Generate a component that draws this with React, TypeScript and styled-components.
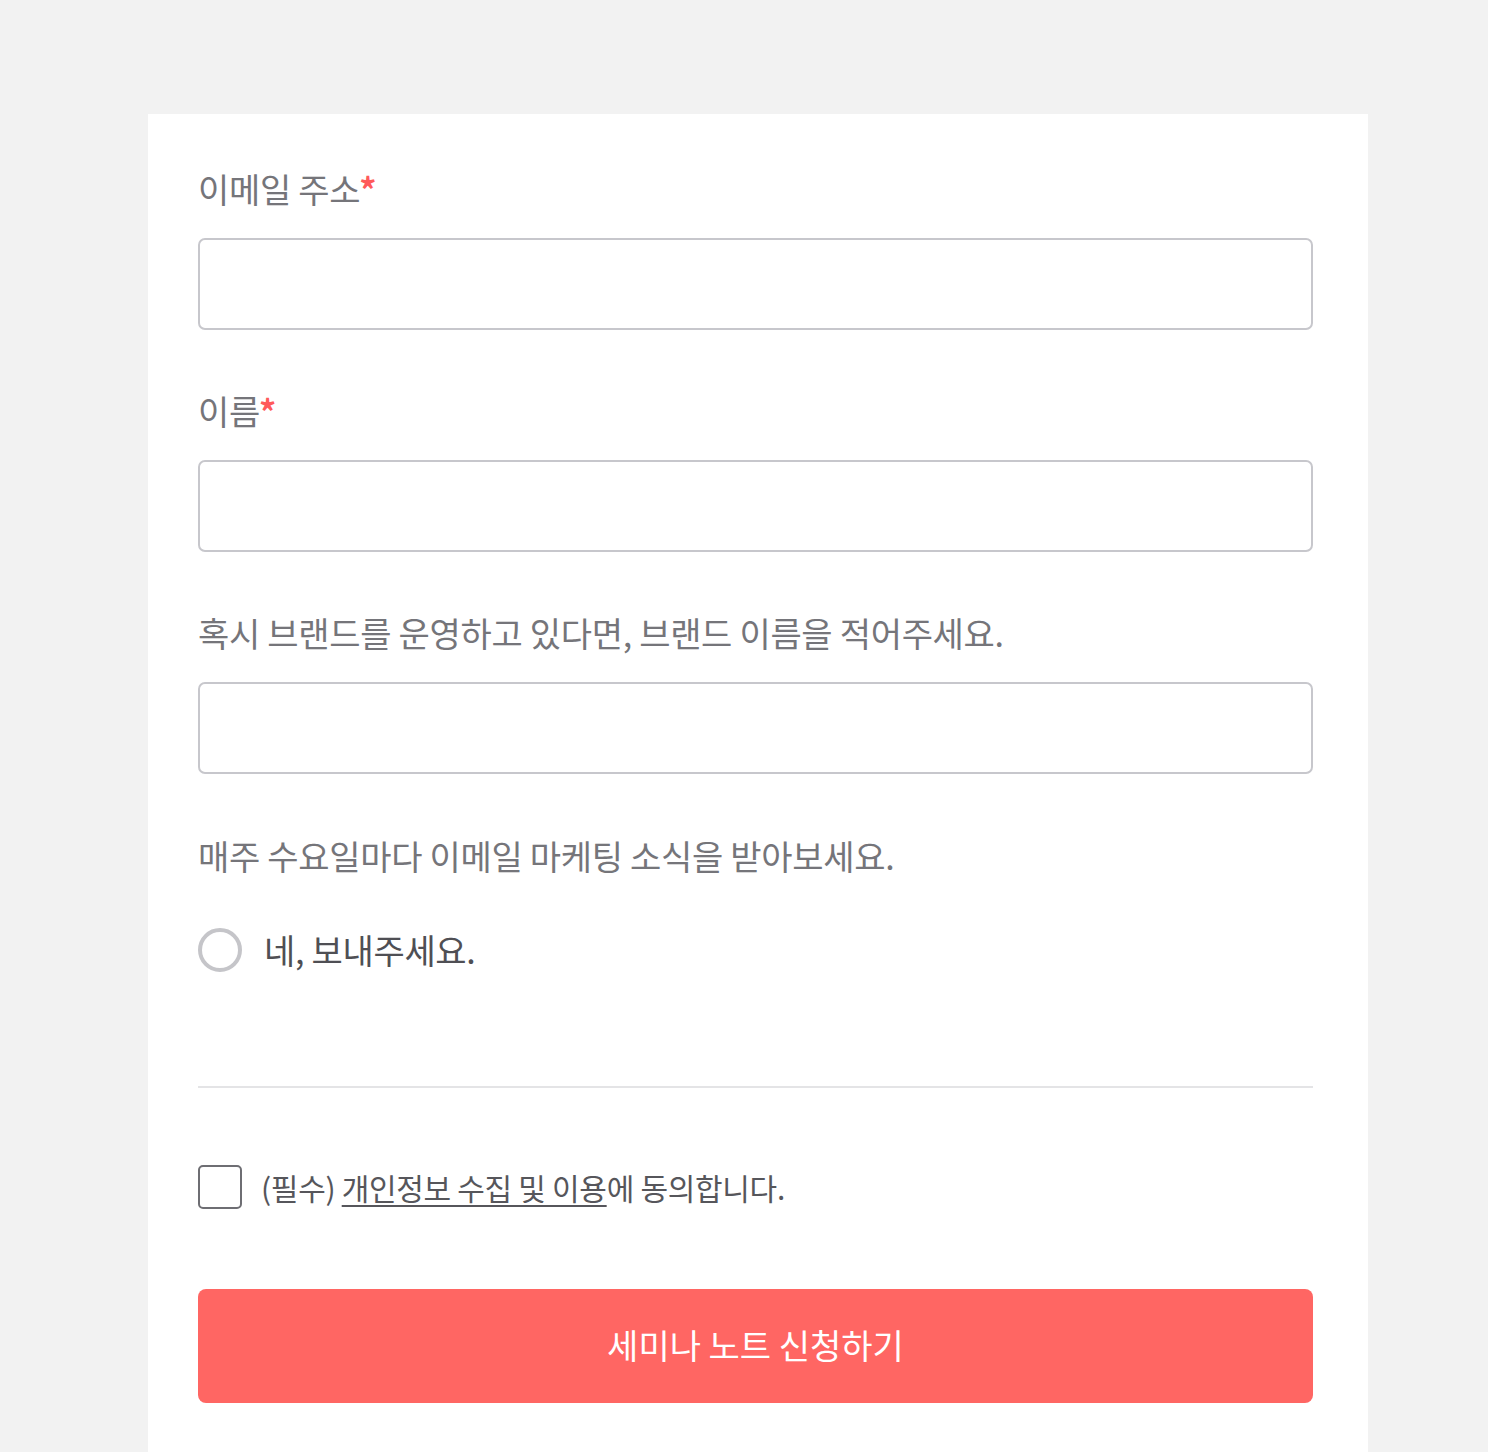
import React from "react";
import styled, { createGlobalStyle } from "styled-components";

const GlobalStyle = createGlobalStyle`
  html, body {
    margin: 0;
    padding: 0;
    background: #f2f2f2;
  }
  body {
    font-family: "Noto Sans CJK KR", "Noto Sans", sans-serif;
  }
`;

const Page = styled.div`
  min-height: 1452px;
  padding: 114px 0 0 148px;
  box-sizing: border-box;
`;

const Card = styled.form`
  width: 1220px;
  min-height: 1338px;
  background: #ffffff;
  box-sizing: border-box;
  padding: 53px 55px 48px 50px;
  display: flex;
  flex-direction: column;
`;

const Field = styled.div<{ $gap?: number }>`
  display: flex;
  flex-direction: column;
  gap: 27px;
  margin-bottom: ${(p) => p.$gap ?? 59}px;
`;

const Label = styled.label`
  font-size: 34px;
  line-height: 44px;
  color: #75757a;
  letter-spacing: -0.3px;
  white-space: nowrap;
`;

const Required = styled.span`
  color: #ff5a5a;
  font-weight: 700;
  margin-left: -1px;
`;

const Input = styled.input`
  height: 92px;
  width: 100%;
  box-sizing: border-box;
  border: 2px solid #c7c7cc;
  border-radius: 7px;
  background: #fff;
  font-size: 28px;
  padding: 0 20px;
  font-family: inherit;
  outline: none;
`;

const Section = styled.div`
  display: flex;
  flex-direction: column;
  gap: 50px;
`;

const OptionRow = styled.label`
  display: flex;
  align-items: center;
  gap: 22px;
  cursor: pointer;
`;

const Radio = styled.span`
  width: 44px;
  height: 44px;
  box-sizing: border-box;
  border: 4px solid #c5c5c9;
  border-radius: 50%;
  flex-shrink: 0;
`;

const OptionText = styled.span`
  font-size: 34px;
  line-height: 44px;
  color: #4f4f54;
  letter-spacing: -0.3px;
  font-weight: 400;
`;

const Divider = styled.hr`
  border: none;
  height: 2px;
  background: #e4e4e6;
  margin: 114px 0 77px;
  width: 100%;
`;

const CheckRow = styled.label`
  display: flex;
  align-items: center;
  gap: 19px;
  cursor: pointer;
`;

const CheckBox = styled.span`
  width: 44px;
  height: 44px;
  box-sizing: border-box;
  border: 2px solid #6e6e73;
  border-radius: 5px;
  flex-shrink: 0;
`;

const CheckText = styled.span`
  font-size: 30px;
  line-height: 44px;
  color: #56565b;
  letter-spacing: -0.3px;
  font-weight: 400;
`;

const TermsLink = styled.span`
  text-decoration: underline;
  text-decoration-thickness: 2px;
  text-underline-offset: 5px;
`;

const Submit = styled.button`
  margin-top: 80px;
  height: 114px;
  width: 100%;
  border: none;
  border-radius: 8px;
  background: #ff6663;
  color: #ffffff;
  font-family: inherit;
  font-size: 34px;
  line-height: 44px;
  padding: 0 0 2px;
  letter-spacing: 0;
  cursor: pointer;
`;

export default function App() {
  return (
    <>
      <GlobalStyle />
      <Page>
        <Card onSubmit={(e) => e.preventDefault()}>
          <Field>
            <Label>
              이메일 주소<Required>*</Required>
            </Label>
            <Input type="email" />
          </Field>
          <Field>
            <Label>
              이름<Required>*</Required>
            </Label>
            <Input type="text" />
          </Field>
          <Field $gap={60}>
            <Label>혹시 브랜드를 운영하고 있다면, 브랜드 이름을 적어주세요.</Label>
            <Input type="text" />
          </Field>
          <Section>
            <Label>매주 수요일마다 이메일 마케팅 소식을 받아보세요.</Label>
            <OptionRow>
              <Radio />
              <OptionText>네, 보내주세요.</OptionText>
            </OptionRow>
          </Section>
          <Divider />
          <CheckRow>
            <CheckBox />
            <CheckText>
              (필수) <TermsLink>개인정보 수집 및 이용</TermsLink>에 동의합니다.
            </CheckText>
          </CheckRow>
          <Submit type="submit">세미나 노트 신청하기</Submit>
        </Card>
      </Page>
    </>
  );
}
